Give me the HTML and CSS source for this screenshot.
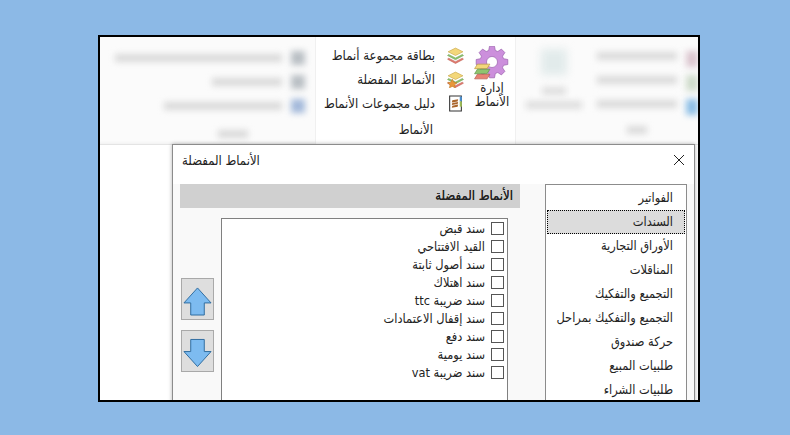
FILE: index.html
```html
<!DOCTYPE html>
<html lang="ar">
<head>
<meta charset="utf-8">
<title>الأنماط المفضلة</title>
<link rel="stylesheet" href="styles.css">
</head>
<body>
<svg class="defs" width="0" height="0" aria-hidden="true">
  <defs>
    <g id="layers">
      <path d="M8 1 15 4.500 8 8 1 4.500Z" fill="#f3d77a" stroke="#c9a94a" stroke-width=".6"/>
      <path d="M1.500 7 8 10.300 14.500 7 15.500 8 8 12 .5 8Z" fill="#8fc46f" stroke="#6a9c50" stroke-width=".5"/>
      <path d="M1.500 10.500 8 13.800 14.500 10.500 15.500 11.500 8 15.500 .5 11.500Z" fill="#e57c70" stroke="#b9584e" stroke-width=".5"/>
    </g>
    <g id="layersflat">
      <path d="M3 1H14L11.500 5H.5Z" fill="#f3d77a" stroke="#b99a3e" stroke-width=".6"/>
      <path d="M3 5.500H14L11.500 9.500H.5Z" fill="#8fc46f" stroke="#5f9547" stroke-width=".6"/>
      <path d="M3 10H14L11.500 14H.5Z" fill="#e88374" stroke="#b55a4e" stroke-width=".6"/>
    </g>
  </defs>
</svg>
<main class="frame">
  <section class="ribbon">
    <div class="group group-left">
      <div class="ghost-row"><i class="ghost-text w167"></i><i class="ghost-icon tone-grey"></i></div>
      <div class="ghost-row"><i class="ghost-text w70"></i><i class="ghost-icon tone-grey"></i></div>
      <div class="ghost-row"><i class="ghost-text w118"></i><i class="ghost-icon tone-blue"></i></div>
      <div class="ghost-label"><i class="ghost-text w30"></i></div>
    </div>
    <div class="group group-styles">
      <div class="styles-top">
        <ul class="commands">
          <li class="command">
            <svg class="cmd-icon" viewBox="0 0 16 16"><use href="#layers"/></svg>
            <span>بطاقة مجموعة أنماط</span>
          </li>
          <li class="command">
            <svg class="cmd-icon" viewBox="0 0 16 16"><use href="#layers"/><path d="M5 7.500 6.400 10.500 9.500 11 7.200 13 7.800 16 5 14.500 2.200 16 2.800 13 .5 11 3.600 10.500Z" fill="#e8973a" stroke="#b86f22" stroke-width=".4"/></svg>
            <span>الأنماط المفضلة</span>
          </li>
          <li class="command">
            <svg class="cmd-icon" viewBox="0 0 16 16"><path d="M2.500 1H13.500V15H2.500Z" fill="#fff" stroke="#333" stroke-width="1"/><path d="M12 1.500H14V6H12Z" fill="#4a8fd0"/><path d="M12 6H14V11H12Z" fill="#9dbb55"/><path d="M5 5 10.500 4 10 6 4.500 7ZM5 7.500 10.500 6.500 10 8.500 4.500 9.500ZM5 10 10.500 9 10 11 4.500 12Z" fill="#a9652c"/></svg>
            <span>دليل مجموعات الأنماط</span>
          </li>
        </ul>
        <div class="big-command">
          <svg class="gear" viewBox="0 0 36 34">
            <path fill-rule="evenodd" d="M29.500 12.700 33.800 13.500 33.800 18.500 29.500 19.300 28.500 21.800 30.900 25.400 27.400 28.900 23.800 26.500 21.300 27.500 20.500 31.800 15.500 31.800 14.700 27.500 12.200 26.500 8.600 28.900 5.100 25.400 7.500 21.800 6.500 19.300 2.200 18.500 2.200 13.500 6.500 12.700 7.500 10.200 5.100 6.600 8.600 3.100 12.200 5.500 14.700 4.500 15.500 .2 20.500 .2 21.300 4.500 23.800 5.500 27.400 3.100 30.900 6.600 28.500 10.200ZM18 10.500A5.500 5.500 0 1 0 18 21.500 5.500 5.500 0 1 0 18 10.500Z" fill="#cc8fdc" stroke="#9a62ac" stroke-width=".7"/>
            <svg x="0" y="17" width="17" height="17" viewBox="0 0 15 15"><use href="#layersflat"/></svg>
          </svg>
          <span class="big-label">إدارة<br>الأنماط</span>
        </div>
      </div>
      <div class="group-label">الأنماط</div>
    </div>
    <div class="group group-right">
      <div class="ghost-big">
        <i class="ghost-tile"></i>
        <i class="ghost-text w24"></i>
        <i class="ghost-text w56"></i>
      </div>
      <div class="ghost-col">
        <div class="ghost-line"><i class="ghost-text w80"></i></div>
        <div class="ghost-line"><i class="ghost-text w80"></i></div>
        <div class="ghost-line"><i class="ghost-text w80"></i></div>
        <div class="ghost-line short"><i class="ghost-text w20"></i></div>
      </div>
      <div class="ghost-edge">
        <i class="edge tone-rose"></i><i class="edge tone-green"></i><i class="edge tone-sky"></i>
      </div>
    </div>
  </section>
  <section class="dialog">
    <header class="dialog-head">
      <h1 class="dialog-title">الأنماط المفضلة</h1>
      <svg class="close" viewBox="0 0 12 12"><path d="M1 1 11 11M11 1 1 11" stroke="#222" stroke-width="1" fill="none"/></svg>
    </header>
    <div class="dialog-body">
      <div class="main-pane">
        <div class="pane-title">الأنماط المفضلة</div>
        <div class="pane-content">
          <div class="arrows">
            <button class="arrow-btn" type="button" aria-label="up">
              <svg viewBox="0 0 30 30" class="arrow"><path d="M15 1.500 29 17H22V29.500H8V17H1Z" fill="#7dbbf0" stroke="#2d6b9f" stroke-width="1"/></svg>
            </button>
            <button class="arrow-btn" type="button" aria-label="down">
              <svg viewBox="0 0 30 30" class="arrow"><path d="M8 1H22V13.500H29L15 29 1 13.500H8Z" fill="#7dbbf0" stroke="#2d6b9f" stroke-width="1"/></svg>
            </button>
          </div>
          <ul class="checklist">
            <li class="check-row"><span class="box"></span><span>سند قبض</span></li>
            <li class="check-row"><span class="box"></span><span>القيد الافتتاحي</span></li>
            <li class="check-row"><span class="box"></span><span>سند أصول ثابتة</span></li>
            <li class="check-row"><span class="box"></span><span>سند اهتلاك</span></li>
            <li class="check-row"><span class="box"></span><span>سند ضريبة ttc</span></li>
            <li class="check-row"><span class="box"></span><span>سند إقفال الاعتمادات</span></li>
            <li class="check-row"><span class="box"></span><span>سند دفع</span></li>
            <li class="check-row"><span class="box"></span><span>سند يومية</span></li>
            <li class="check-row"><span class="box"></span><span>سند ضريبة vat</span></li>
          </ul>
        </div>
      </div>
      <ul class="categories">
        <li class="category">الفواتير</li>
        <li class="category selected">السندات</li>
        <li class="category">الأوراق التجارية</li>
        <li class="category">المناقلات</li>
        <li class="category">التجميع والتفكيك</li>
        <li class="category">التجميع والتفكيك بمراحل</li>
        <li class="category">حركة صندوق</li>
        <li class="category">طلبيات المبيع</li>
        <li class="category">طلبيات الشراء</li>
      </ul>
    </div>
  </section>
</main>
</body>
</html>
```
FILE: styles.css
```css
* { box-sizing: border-box; }
html, body { margin: 0; padding: 0; }
body {
  width: 790px;
  height: 435px;
  background: #8cb9e6;
  font-family: "DejaVu Sans Condensed", "DejaVu Sans", "Noto Sans", sans-serif;
  font-stretch: condensed;
  color: #222;
  overflow: hidden;
}
.defs { display: block; height: 0; }
ul { list-style: none; margin: 0; padding: 0; }
.frame {
  width: 602px;
  height: 367px;
  margin: 35px 0 0 98px;
  border: 2px solid #000;
  background: #fff;
  overflow: hidden;
  display: flex;
  flex-direction: column;
}
.ribbon {
  flex: none;
  height: 108px;
  display: flex;
  background: #fbfbfb;
  border-bottom: 1px solid #e4e4e4;
  box-shadow: inset 0 -3px 3px -2px #f0f0f0;
}
.group { height: 100%; }
.group-left {
  width: 215px;
  padding: 13px 10px 0 0;
  display: flex;
  flex-direction: column;
  gap: 8px;
}
.ghost-row { display: flex; justify-content: flex-end; align-items: center; gap: 9px; height: 16px; }
.ghost-text { display: block; height: 8px; background: #d9d9d9; filter: blur(3px); }
.ghost-icon { display: block; width: 14px; height: 14px; filter: blur(3px); }
.tone-grey { background: #b9bfc4; }
.tone-blue { background: #a3b9da; }
.w167 { width: 167px; }
.w118 { width: 118px; }
.w70 { width: 70px; }
.w30 { width: 30px; }
.w80 { width: 80px; }
.w56 { width: 56px; }
.w24 { width: 24px; }
.w20 { width: 20px; }
.ghost-label { display: flex; justify-content: flex-end; padding: 8px 57px 0 0; }

.group-styles {
  width: 201px;
  background: #fff;
  border-left: 1px solid #f0f0f0;
  border-right: 1px solid #f0f0f0;
  display: flex;
  flex-direction: column;
}
.styles-top { display: flex; justify-content: flex-end; height: 80px; }
.commands { display: flex; flex-direction: column; padding-top: 6px; margin-right: 5px; }
.command {
  display: flex;
  align-items: center;
  gap: 12px;
  height: 24px;
  font-size: 13px;
  direction: rtl;
  white-space: nowrap;
}
.cmd-icon { width: 17px; height: 17px; flex: none; }
.big-command { width: 46px; display: flex; flex-direction: column; align-items: center; padding-top: 9px; }
.gear { width: 36px; height: 34px; flex: none; }
.big-label { direction: rtl; text-align: center; font-size: 13px; line-height: 14px; margin-top: 1px; white-space: nowrap; }
.group-label { direction: rtl; font-size: 13px; padding: 5px 82px 0 0; text-align: right; }

.group-right { flex: 1; display: flex; background: #fbfbfb; }
.ghost-big { width: 75px; display: flex; flex-direction: column; align-items: center; padding-top: 12px; }
.ghost-tile { display: block; width: 26px; height: 26px; background: #e2ebeb; filter: blur(4px); margin-bottom: 12px; }
.ghost-big .ghost-text { margin-bottom: 6px; background: #dedede; }
.ghost-col { flex: 1; padding-top: 15px; display: flex; flex-direction: column; gap: 16px; align-items: center; }
.ghost-line { height: 8px; }
.ghost-line.short { margin-top: 2px; }
.ghost-line .ghost-text { background: #dadada; }
.ghost-edge { width: 16px; padding-top: 14px; display: flex; flex-direction: column; gap: 8px; }
.edge { display: block; width: 12px; height: 16px; margin-left: 4px; filter: blur(3px); }
.tone-rose { background: #dcc6cf; }
.tone-green { background: #cfdccb; }
.tone-sky { background: #8dbfe6; }

.dialog {
  flex: 1;
  margin: -1px 3px 0 72px;
  border: 1px solid #8c8c8c;
  border-bottom: 0;
  background: #f9f9f9;
  box-shadow: 0 0 4px rgba(0,0,0,.3);
  display: flex;
  flex-direction: column;
  position: relative;
}
.dialog-head {
  flex: none;
  height: 39px;
  background: #fff;
  display: flex;
  justify-content: space-between;
  align-items: center;
  padding: 0 9px 9px 9px;
}
.dialog-title { margin: 0; font-weight: 400; font-size: 13px; direction: rtl; }
.close { width: 12px; height: 12px; }
.dialog-body { flex: 1; display: flex; padding: 0 8px 0 7px; gap: 25px; min-height: 0; }
.main-pane { width: 340px; flex: none; display: flex; flex-direction: column; }
.pane-title {
  height: 24px;
  background: #d0d0d0;
  direction: rtl;
  font-size: 13px;
  font-weight: 400;
  line-height: 23px;
  padding-right: 7px;
  color: #222;
  text-shadow: 0 0 .4px #222;
}
.pane-content { flex: 1; display: flex; padding-top: 10px; min-height: 0; }
.arrows { width: 41px; padding: 60px 0 0 1px; display: flex; flex-direction: column; gap: 10px; flex: none; }
.arrow-btn {
  width: 33px;
  height: 42px;
  padding: 4px 0 0;
  border: 1px solid #a9a9a9;
  background: #dedede;
  display: flex;
  align-items: center;
  justify-content: center;
}
.arrow { width: 29px; height: 30px; }
.checklist {
  width: 287px;
  border: 1px solid #808080;
  border-bottom: 0;
  background: #fff;
}
.check-row {
  direction: rtl;
  height: 18px;
  display: flex;
  align-items: center;
  gap: 6px;
  font-size: 12.700px;
  padding-right: 2px;
  white-space: nowrap;
}
.box { width: 13px; height: 13px; border: 1px solid #555; background: #fff; flex: none; margin-right: 1px; }
.categories {
  width: 142px;
  flex: none;
  border: 1px solid #8c8c8c;
  border-bottom: 0;
  background: #fff;
  padding: 1px;
  overflow: hidden;
}
.category {
  direction: rtl;
  height: 24px;
  line-height: 24px;
  font-size: 12.700px;
  padding-right: 12px;
  white-space: nowrap;
}
.category.selected { background: #dcdcdc; outline: 1px dotted #000; outline-offset: -1px; }
```
